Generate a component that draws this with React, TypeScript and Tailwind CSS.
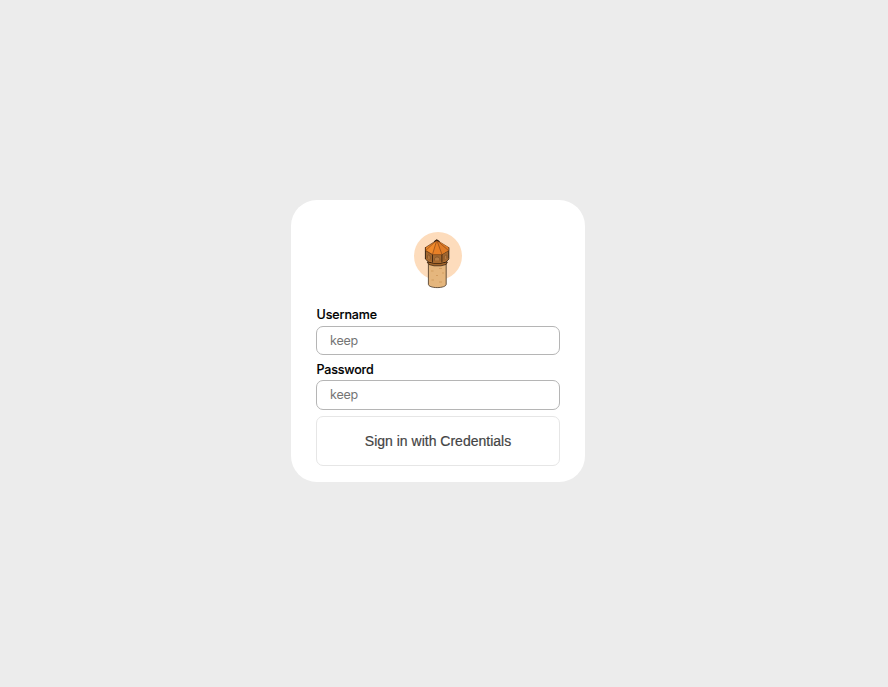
function TowerLogo() {
  return (
    <svg width="48" height="57" viewBox="0 0 48 57" className="block shrink-0">
      <circle cx="24" cy="24" r="24" fill="#fddcbc" />
      <path d="M14.4 30V52.3C14.4 54.2 18.2 55.6 23.2 55.6S32.2 54.2 32.2 52.3V30Z" fill="#e5b67d" stroke="#43301e" strokeWidth=".8" />
      <path d="M17 39h2.5M25 36.5h3M22 43.5h2M28 41h2M17.5 48h2.5M25 50h3" stroke="#d39d60" strokeWidth="1.2" />
      <path d="M13 30 15 32.5 20 33.8h7l5-1.3 1.5-2.5Z" fill="#a4672c" stroke="#2c1a0d" strokeWidth=".7" />
      <path d="M11.4 15.5V27l3.3 3 4.8 1.2h7.7l4.6-1.2 3-3V15.5Z" fill="#a2672f" stroke="#241408" strokeWidth=".9" />
      <path d="M12 26.5 15 29.2l4.3 1.1h8.2l4.2-1.1 2.6-2.7" fill="none" stroke="#b87535" strokeWidth=".9" />
      <path d="M20.5 28.6v-1.4c0-3 5.3-3 5.3 0v1.4M13.6 26.4v-3c1-1 2.2 0 2.6 1.5v2.6M32.8 26.4v-3c-1-1-2.2 0-2.6 1.5v2.6" fill="#b77c43" stroke="#7d4e25" strokeWidth=".7" />
      <path d="M18.5 22v8.5M27.9 22v8.5" stroke="#2c1a0d" strokeWidth=".8" />
      <path d="M22.8 8.2 11.5 15.5V18.5L18.5 22.6h9.4l6.8-4.1v-3Z" fill="#f08a2c" stroke="#452510" strokeWidth=".6" />
      <path d="M22.8 8.2 18.5 22.3h9.4Z" fill="#e98026" />
      <path d="M22.8 8.2 27.9 22.3l6.5-4v-2.8Z" fill="#e07b25" />
      <path d="M22.8 8.2 12 18.2M22.8 8.2 18.5 22.3M22.8 8.2 27.9 22.3M22.8 8.2 34 18.2" stroke="#793e15" strokeWidth=".6" />
      <path d="m20.2 9.6 2.6-1.8 2.7 1.8" fill="none" stroke="#25150b" strokeWidth="1.1" />
    </svg>
  );
}

function Field({ label, type, labelClass, inputClass }: { label: string; type: string; labelClass: string; inputClass: string }) {
  return (
    <label className="block">
      <span className={`block h-[22px] pl-[0.5px] text-[12.5px] font-medium text-black [-webkit-text-stroke:0.15px_black] ${labelClass}`}>{label}</span>
      <input
        type={type}
        placeholder="keep"
        className={`block w-full rounded-[7px] border border-[#b5b5b5] bg-white px-[13px] text-[12.5px] tracking-[-0.2px] outline-none placeholder:text-[#757575] ${inputClass}`}
      />
    </label>
  );
}

export default function App() {
  return (
    <div className="h-[687px] w-full bg-[#ececec] pr-3 pb-[5px] font-['Inter',sans-serif]">
      <main className="flex h-full items-center justify-center">
        <form className="flex h-[282px] w-[294px] flex-col rounded-[26px] bg-white px-[25px] pt-8" onSubmit={(e) => e.preventDefault()}>
          <div className="flex h-[72px] justify-center">
            <TowerLogo />
          </div>
          <div className="flex flex-col gap-[3px]">
            <Field label="Username" type="text" labelClass="leading-[22px] tracking-[-0.1px]" inputClass="h-[29px]" />
            <Field label="Password" type="password" labelClass="leading-[24px] tracking-[-0.2px]" inputClass="h-[30px] pb-[2px]" />
          </div>
          <button className="mt-[6px] h-[50px] shrink-0 rounded-[7px] border border-[#e6e6e6] bg-white font-['Liberation_Sans',sans-serif] text-[14px] text-[#444] [-webkit-text-stroke:0.2px_#444]">
            Sign in with Credentials
          </button>
        </form>
      </main>
    </div>
  );
}
